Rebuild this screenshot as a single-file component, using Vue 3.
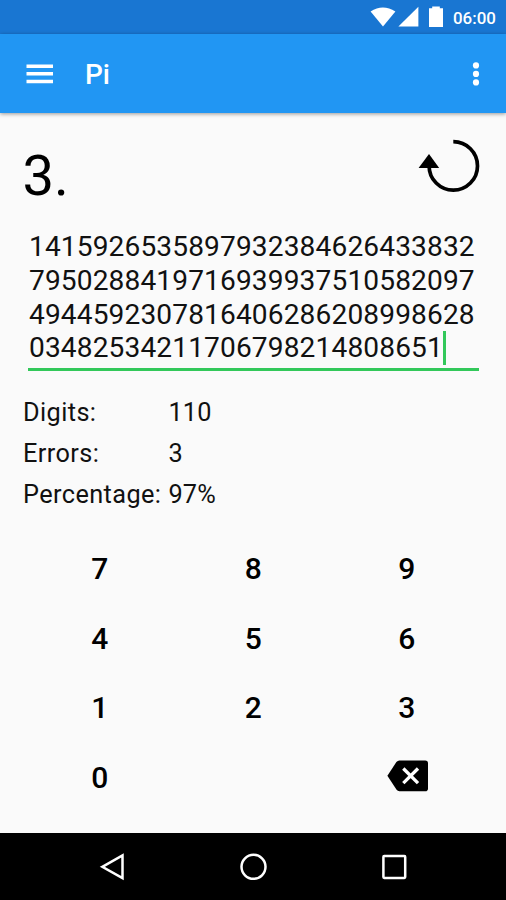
<script setup>
const lines = [
  '1415926535897932384626433832',
  '7950288419716939937510582097',
  '4944592307816406286208998628',
  '03482534211706798214808651',
]
const stats = [
  { label: 'Digits:', value: '110' },
  { label: 'Errors:', value: '3' },
  { label: 'Percentage:', value: '97%' },
]
const keys = ['7', '8', '9', '4', '5', '6', '1', '2', '3', '0', '']
</script>

<template>
  <div class="screen">
    <div class="status">
      <svg class="status-icons" width="76" height="22" viewBox="0 0 76 22" fill="#fff">
        <path d="M0.6 5.6 Q12.8 -2.6 25.4 5.6 L13 20.6 Z" />
        <path d="M48.4 0.8 V20.6 H28.4 Z" />
        <path d="M59 2.2 H62.2 V0.4 H69.8 V2.2 H73 V20.9 H59 Z" />
      </svg>
      <span class="clock">06:00</span>
    </div>
    <header class="appbar">
      <svg class="menu" width="27" height="20" viewBox="0 0 27 20" fill="#fff">
        <path d="M0.5 0.6H27V4H0.5ZM0.5 8.1H27V11.5H0.5ZM0.5 15.8H27V19.2H0.5Z" />
      </svg>
      <h1 class="title">Pi</h1>
      <svg class="more" width="8" height="26" viewBox="0 0 8 26" fill="#fff">
        <circle cx="4" cy="4.4" r="3.1" />
        <circle cx="4" cy="12.9" r="3.1" />
        <circle cx="4" cy="21.4" r="3.1" />
      </svg>
    </header>
    <main class="content">
      <div class="top">
        <span class="three">3.</span>
        <svg class="reset" width="64" height="56" viewBox="0 0 64 56">
          <path d="M35.3 4.7 A24.2 24.2 0 1 1 11.1 28.9 V25" fill="none" stroke="#000" stroke-width="3.7" />
          <path d="M0.6 30.9 L11 16.9 L21.2 30.9 Z" />
        </svg>
      </div>
      <div class="field">
        <div v-for="(line, i) in lines" :key="i" class="line">
          <span>{{ line }}</span><i v-if="i === lines.length - 1" class="caret"></i>
        </div>
      </div>
      <dl class="stats">
        <template v-for="s in stats" :key="s.label">
          <dt>{{ s.label }}</dt>
          <dd>{{ s.value }}</dd>
        </template>
      </dl>
      <div class="keypad">
        <button v-for="(k, i) in keys" :key="i" class="key">{{ k }}</button>
        <button class="key" aria-label="Backspace">
          <svg class="backspace" width="42" height="32" viewBox="0 0 42 32">
            <path d="M12.4 0.4 H38.2 Q41 0.4 41 3.2 V28.4 Q41 31.2 38.2 31.2 H12.4 Q10.6 31.2 9.4 29.6 L0.4 15.8 L9.4 2 Q10.6 0.4 12.4 0.4 Z" />
            <path d="M16.3 8.5 L31 23.1 M31 8.5 L16.3 23.1" stroke="#fff" stroke-width="3.3" />
          </svg>
        </button>
      </div>
    </main>
    <nav class="navbar">
      <svg width="30" height="30" viewBox="0 0 30 30"><path d="M5.3 14.8 L25.5 3.4 V26.2 Z" /></svg>
      <svg width="30" height="30" viewBox="0 0 30 30"><circle cx="15.5" cy="14.8" r="12" /></svg>
      <svg width="30" height="30" viewBox="0 0 30 30"><rect x="4.4" y="4.1" width="21.8" height="21.8" rx="0.8" /></svg>
    </nav>
  </div>
</template>

<style>
body {
  margin: 0;
  background: #fafafa;
}
</style>

<style scoped>
.screen {
  display: flex;
  flex-direction: column;
  width: 506px;
  height: 900px;
  overflow: hidden;
  background: #fafafa;
  color: #111;
  font-family: Roboto, sans-serif;
}
.status {
  display: flex;
  justify-content: flex-end;
  box-sizing: border-box;
  height: 34px;
  flex: none;
  padding: 6px 9px 0 0;
  background: #1976d2;
  color: #fff;
}
.status-icons {
  margin-right: 7px;
}
.clock {
  width: 44px;
  font-size: 16.9px;
  font-weight: 500;
  line-height: 24px;
  white-space: nowrap;
}
.appbar {
  display: flex;
  align-items: center;
  box-sizing: border-box;
  height: 79px;
  flex: none;
  padding: 0 26px;
  background: #2196f3;
  color: #fff;
  box-shadow: 0 1px 4px rgba(0, 0, 0, 0.4);
}
.title {
  margin: 3px 0 0 32px;
  font-size: 28px;
  font-weight: 500;
  line-height: 34px;
}
.more {
  margin-left: auto;
}
.content {
  display: flex;
  flex-direction: column;
  flex: 1;
  padding: 0 22.5px;
}
.top {
  display: flex;
  justify-content: space-between;
  height: 116px;
}
.three {
  margin-top: 30px;
  font-size: 56.2px;
  line-height: 66px;
  color: #000;
}
.reset {
  margin: 24px 1.5px 0 0;
}
.field {
  box-sizing: border-box;
  height: 142px;
  margin: 0 5px;
  padding: 1px 0 0 1.5px;
  border-bottom: 3px solid #32c85a;
}
.line {
  display: flex;
  height: 33.8px;
  font-size: 28.1px;
  letter-spacing: 0.13px;
  line-height: 33.8px;
  white-space: nowrap;
}
.caret {
  width: 2.5px;
  height: 34px;
  margin-left: 0.5px;
  background: #32c85a;
}
.stats {
  display: grid;
  grid-template-columns: 145.5px 1fr;
  grid-auto-rows: 41.3px;
  margin: 20.5px 0 0 0.5px;
  font-size: 25.3px;
  line-height: 41.3px;
  white-space: nowrap;
}
.stats dt,
.stats dd {
  margin: 0;
}
.stats dt {
  letter-spacing: 0.4px;
}
.stats dd {
  letter-spacing: 0.1px;
}
.keypad {
  display: grid;
  grid-template-columns: repeat(3, 1fr);
  grid-auto-rows: 69.4px;
  margin: 18.9px 0 0 0.5px;
}
.key {
  display: flex;
  align-items: center;
  justify-content: center;
  padding: 0;
  border: 0;
  background: none;
  color: #000;
  font: 500 30px Roboto, sans-serif;
}
.backspace {
  margin: 0 0 2.5px 2.5px;
}
.navbar {
  display: flex;
  justify-content: center;
  align-items: center;
  gap: 111px;
  height: 67px;
  flex: none;
  background: #000;
}
.navbar svg {
  fill: none;
  stroke: #fff;
  stroke-width: 2.5;
}
</style>
